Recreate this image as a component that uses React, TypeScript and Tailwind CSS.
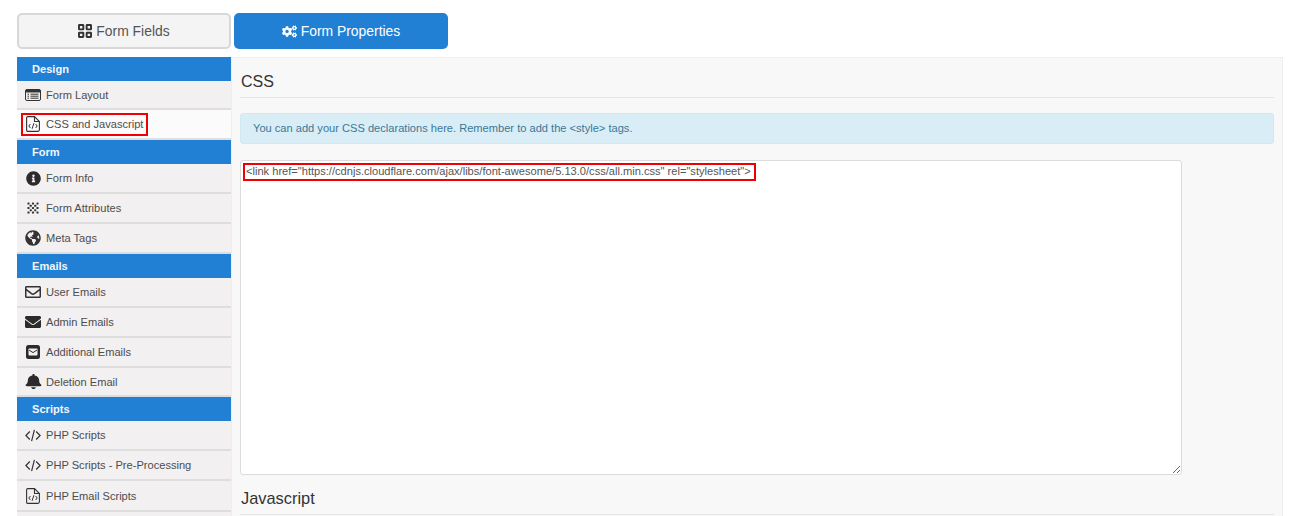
import type { ReactNode } from "react";
import {
  FaBell,
  FaCogs,
  FaEnvelope,
  FaGlobeAmericas,
  FaInfoCircle,
  FaRegEnvelope,
} from "react-icons/fa";

const FONT = "font-['Liberation_Sans',Arial,sans-serif]";

function GridIcon() {
  return (
    <svg viewBox="0 0 16 16" className="h-[14px] w-[14px] text-[#333]" fill="none" stroke="currentColor" strokeWidth="2.2">
      <rect x="1.1" y="1.1" width="5" height="5" rx="0.5" />
      <rect x="9.9" y="1.1" width="5" height="5" rx="0.5" />
      <rect x="1.1" y="9.9" width="5" height="5" rx="0.5" />
      <rect x="9.9" y="9.9" width="5" height="5" rx="0.5" />
    </svg>
  );
}

function LayoutIcon() {
  return (
    <svg viewBox="0 0 16 12" className="h-[12px] w-4" fill="none">
      <rect x="0.5" y="0.5" width="15" height="11" rx="1.5" stroke="#333" />
      <rect x="0.5" y="0.5" width="15" height="3" rx="1" fill="#333" />
      <path d="M2.5 5.2h1.5M2.5 7.2h1.5M2.5 9.2h1.5M5.5 5.2h8M5.5 7.2h8M5.5 9.2h8" stroke="#333" />
    </svg>
  );
}

function DotsIcon() {
  const dots = [
    [2, 2], [8, 2], [14, 2], [5, 5], [11, 5], [2, 8], [8, 8], [14, 8], [5, 11], [11, 11], [2, 14], [8, 14], [14, 14],
  ];
  return (
    <svg viewBox="0 0 16 16" className="h-3 w-3" fill="#333">
      {dots.map(([x, y]) => (
        <rect key={`${x}-${y}`} x={x - 1.4} y={y - 1.4} width="2.8" height="2.8" rx="0.8" />
      ))}
    </svg>
  );
}

function EnvelopeBoxIcon() {
  return (
    <svg viewBox="0 0 14 14" className="h-[14px] w-[14px]" fill="none">
      <rect x="0" y="0" width="14" height="14" rx="2.5" fill="#2b2b2b" />
      <rect x="2.5" y="3.5" width="9" height="7" rx="0.8" fill="#f2f0f1" />
      <path d="M3 5l4 2.6L11 5" stroke="#2b2b2b" strokeWidth="1" />
    </svg>
  );
}

function CodeIcon() {
  return (
    <svg viewBox="0 0 16 13" className="h-[13px] w-4" fill="none" stroke="#333" strokeWidth="1.2">
      <path d="M4.8 2.5L0.9 6.5l3.9 4M11.2 2.5l3.9 4-3.9 4M9.4 0.8L6.6 12.2" />
    </svg>
  );
}

function FileCode() {
  return (
    <svg viewBox="0 0 14 16" className="h-4 w-[14px]" fill="none" stroke="#333">
      <path d="M1.8 0.6h6.7l4.9 4.9v8.3a1.6 1.6 0 0 1-1.6 1.6H1.8a1.2 1.2 0 0 1-1.2-1.2V1.8A1.2 1.2 0 0 1 1.8 0.6z" strokeWidth="1.1" />
      <path d="M8.5 0.6v4.9h4.9" strokeWidth="1.1" />
      <path d="M4.4 8L2.8 10l1.6 2M9.6 8l1.6 2-1.6 2M7.9 7.2l-1.8 5.6" strokeWidth="1" />
    </svg>
  );
}

function SideHeader({ label }: { label: string }) {
  return (
    <div className="flex h-6 items-center bg-[#2180d4] pl-[15px] text-[11.1px] font-bold text-[#f2f6fb]">{label}</div>
  );
}

function SideItem({ icon, label, active, boxed, h = "h-[30px]" }: { icon?: ReactNode; label?: string; active?: boolean; boxed?: boolean; h?: string }) {
  return (
    <div className={`relative flex items-center border-b-2 border-[#dedede] pl-2 text-[11.1px] text-[#4d4d4d] ${h} ${active ? "bg-[#fbfbfb]" : "bg-[#f2f0f1]"}`}>
      <span className="flex w-[16px] shrink-0 items-center justify-center">{icon}</span>
      <span className="ml-[5px] pt-px">{label}</span>
      {/* annotation added on the screenshot */}
      {boxed && <span className="absolute left-[4px] top-[3px] h-[23px] w-[127px] border-2 border-[#f00000]" />}
    </div>
  );
}

function Sidebar() {
  return (
    <div className="w-[214px] shrink-0">
      <SideHeader label="Design" />
      <SideItem icon={<LayoutIcon />} label="Form Layout" h="h-[29px]" />
      <SideItem icon={<FileCode />} label="CSS and Javascript" active boxed />
      <SideHeader label="Form" />
      <SideItem icon={<FaInfoCircle className="text-[15px] text-[#2b2b2b]" />} label="Form Info" />
      <SideItem icon={<DotsIcon />} label="Form Attributes" />
      <SideItem icon={<FaGlobeAmericas className="text-[16px] text-[#333]" />} label="Meta Tags" />
      <SideHeader label="Emails" />
      <SideItem icon={<FaRegEnvelope className="text-[16px] text-[#333]" />} label="User Emails" />
      <SideItem icon={<FaEnvelope className="text-[16px] text-[#2b2b2b]" />} label="Admin Emails" />
      <SideItem icon={<EnvelopeBoxIcon />} label="Additional Emails" />
      <SideItem icon={<FaBell className="scale-x-[1.2] text-[15px] text-[#2b2b2b]" />} label="Deletion Email" h="h-[29px]" />
      <SideHeader label="Scripts" />
      <SideItem icon={<CodeIcon />} label="PHP Scripts" />
      <SideItem icon={<CodeIcon />} label="PHP Scripts - Pre-Processing" />
      <SideItem icon={<FileCode />} label="PHP Email Scripts" h="h-[31px]" />
      <SideItem />
    </div>
  );
}

export default function App() {
  return (
    <div className={`h-[516px] w-[1300px] overflow-hidden bg-white ${FONT}`}>
      <div className="flex gap-[3px] pl-[17px] pt-[13px]">
        <button className="flex h-[36px] w-[214px] items-center justify-center gap-1 rounded-[5px] border-2 border-[#d8d8d8] bg-[#f4f4f4] text-[13.9px] text-[#555]">
          <GridIcon />
          Form Fields
        </button>
        <button className="flex h-[36px] w-[214px] items-center justify-center gap-1 rounded-[5px] bg-[#2180d4] text-[13.9px] text-white">
          <FaCogs className="text-[15px]" />
          Form Properties
        </button>
      </div>

      <div className="ml-[17px] mt-[8px] flex w-[1266px] items-start">
        <Sidebar />
        <div className="h-[470px] flex-1 border border-[#eeeeee] bg-[#f8f8f8] pl-[8px] pr-[8px]">
          <h3 className="mt-[15px] border-b border-[#e5e5e5] pb-[6px] pl-px text-base leading-[18px] text-[#333]">CSS</h3>
          <div className="mt-[15px] flex h-[31px] items-center rounded-[3px] border border-[#d0e8f4] bg-[#d9edf7] pl-[12px] text-[11.1px] text-[#3b7896]">
            You can add your CSS declarations here. Remember to add the &lt;style&gt; tags.
          </div>
          <div className="relative mt-[16px] w-[942px]">
            <textarea
              readOnly
              className="block h-[315px] w-[942px] rounded-[3px] border border-[#dcdcdc] bg-white px-[5px] py-[3px] text-[11.1px] leading-[14px] text-[#555] outline-none"
              value={'<link href="https://cdnjs.cloudflare.com/ajax/libs/font-awesome/5.13.0/css/all.min.css" rel="stylesheet">'}
            />
            {/* annotation added on the screenshot */}
            <span className="pointer-events-none absolute left-[3px] top-[3px] h-[18px] w-[513px] border-2 border-[#f00000]" />
          </div>
          <h3 className="mt-[14px] border-b border-[#e5e5e5] pb-[7px] pl-px text-[16.4px] leading-[18px] text-[#333]">Javascript</h3>
        </div>
      </div>
    </div>
  );
}
